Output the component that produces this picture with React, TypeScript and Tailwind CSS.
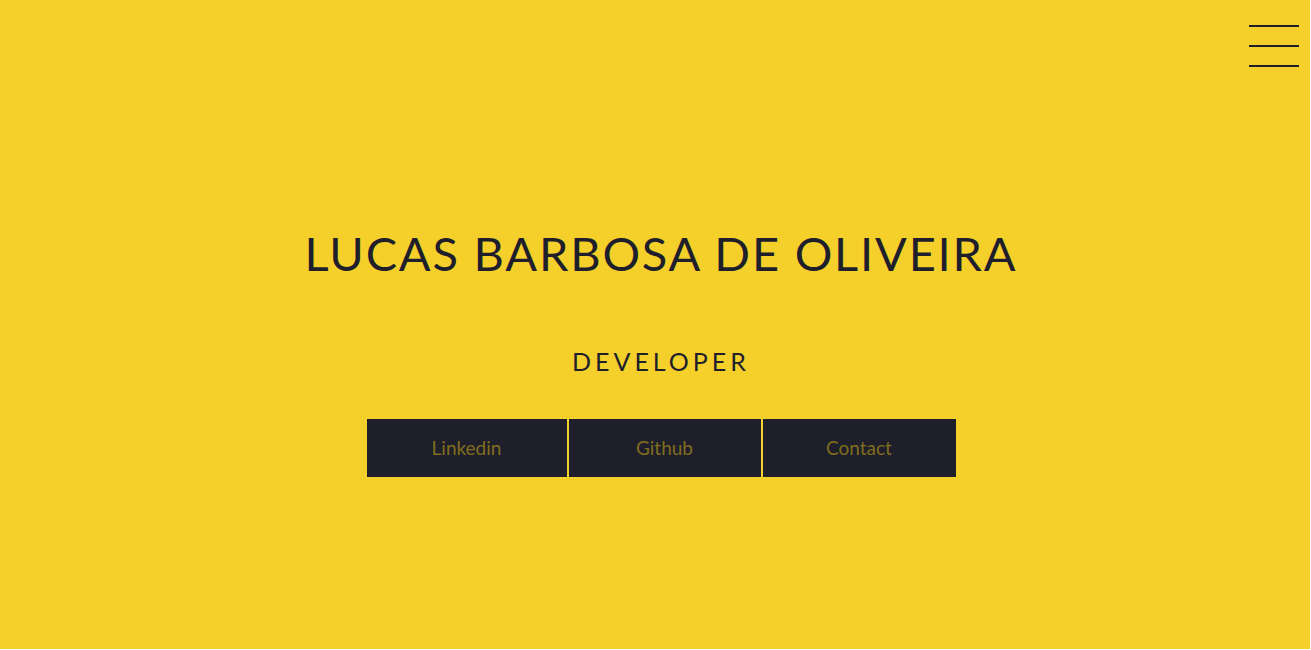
export default function App() {
  return (
    <div className="w-[1311px] h-[650px] bg-white overflow-hidden" style={{ fontFamily: "Lato, 'Noto Sans', sans-serif" }}>
      <div className="relative w-[1310px] h-[649px] bg-[#f5d02a] flex flex-col items-center pl-[12px]">
        <button className="absolute top-[25px] left-[1249px] w-[50px] flex flex-col gap-[18px]">
          <span className="block h-[2px] w-full bg-[#1f1f2b]" />
          <span className="block h-[2px] w-full bg-[#1f1f2b]" />
          <span className="block h-[2px] w-full bg-[#1f1f2b]" />
        </button>
        <h1 className="mt-[224px] text-[47px] leading-[58px] tracking-[1.8px] text-[#1f1f2b] font-normal">
          LUCAS BARBOSA DE OLIVEIRA
        </h1>
        <h2 className="mt-[63px] text-[25px] leading-[32px] tracking-[4px] text-[#1f1f2b] font-normal">
          DEVELOPER
        </h2>
        <div className="mt-[42px] flex gap-[2px]">
          <a className="w-[200px] h-[58px] flex items-center justify-center bg-[#1f1f2b] text-[#7f6e1c] text-[19px]">Linkedin</a>
          <a className="w-[192px] h-[58px] flex items-center justify-center bg-[#1f1f2b] text-[#7f6e1c] text-[19px]">Github</a>
          <a className="w-[193px] h-[58px] flex items-center justify-center bg-[#1f1f2b] text-[#7f6e1c] text-[19px]">Contact</a>
        </div>
      </div>
    </div>
  );
}
